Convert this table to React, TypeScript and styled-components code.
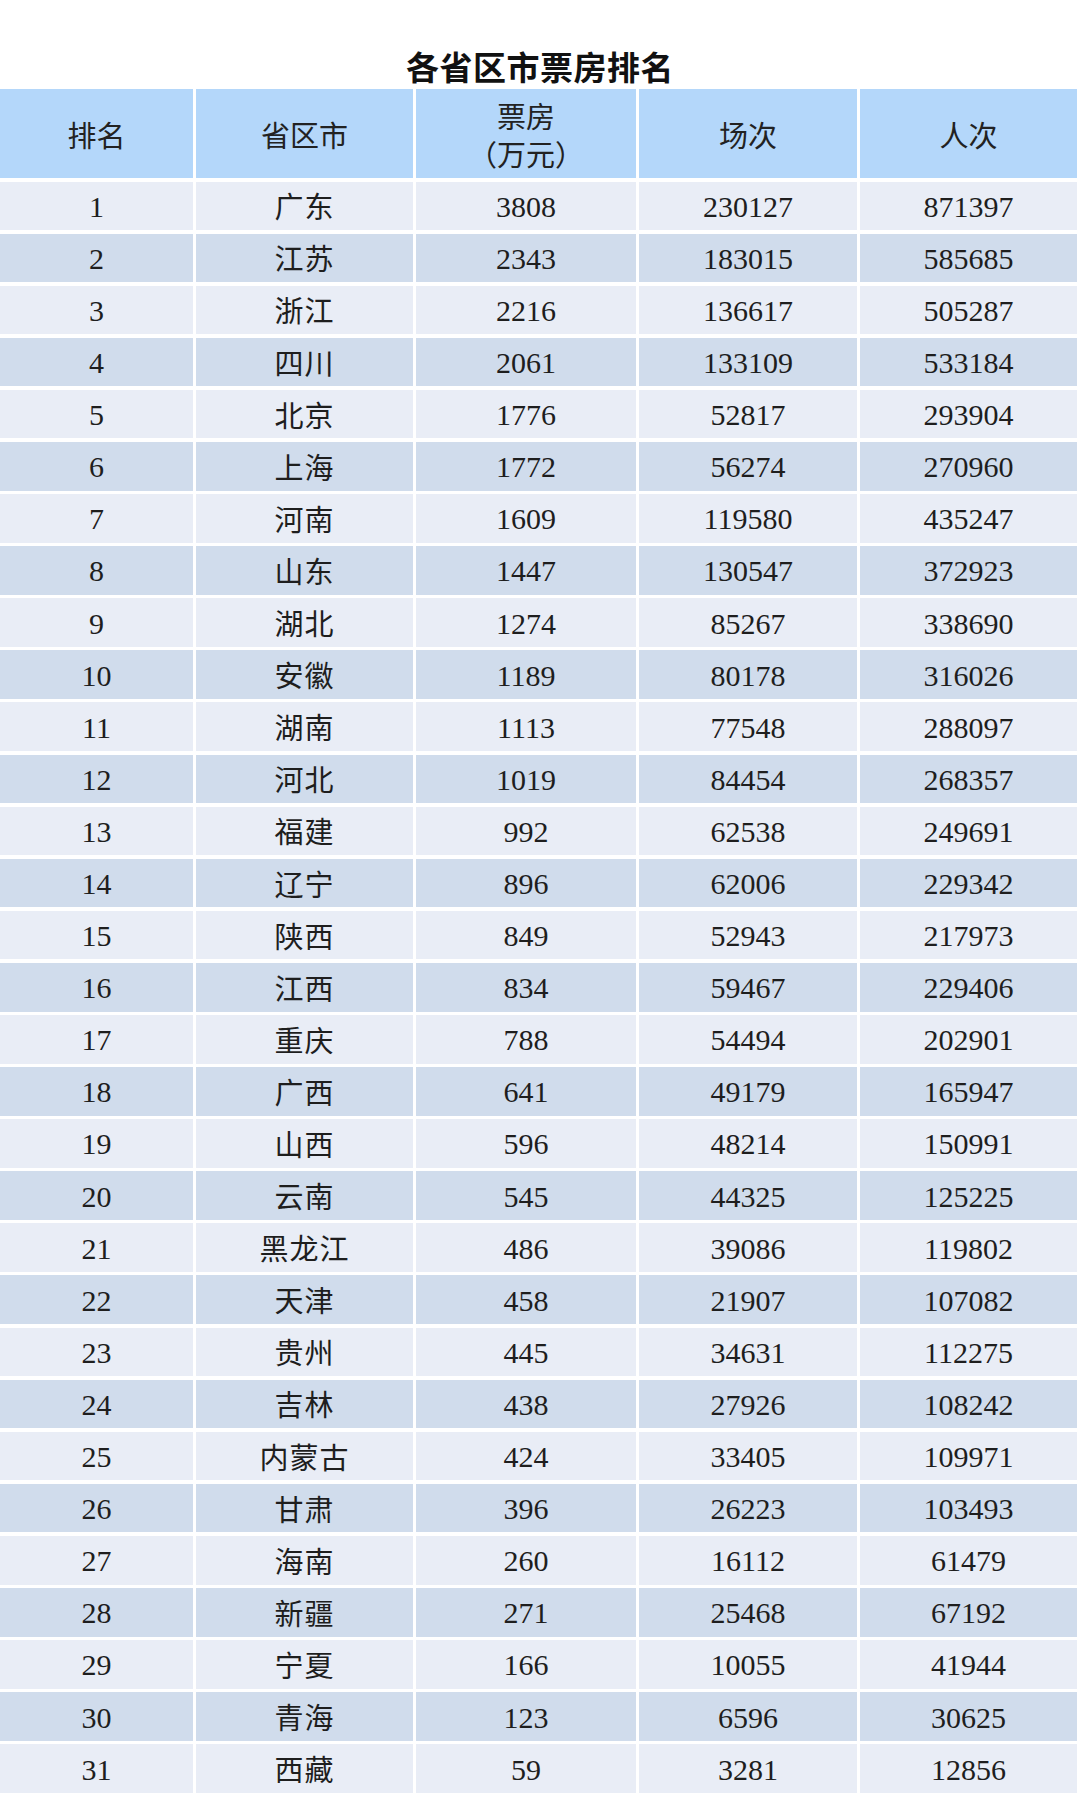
import React from "react"
import styled, { createGlobalStyle } from "styled-components"

const GlobalStyle = createGlobalStyle`
  html, body {
    margin: 0;
    padding: 0;
    background: #ffffff;
  }
  body {
    font-family: "Liberation Serif", "Noto Sans CJK SC", serif;
    color: #1e1e1e;
  }
`

const Page = styled.div`
  width: 1080px;
  padding-top: 50px;
  box-sizing: border-box;
`

const Title = styled.h1`
  margin: 0 0 6px;
  font-family: "Noto Sans CJK SC", sans-serif;
  font-size: 33px;
  line-height: 33px;
  font-weight: 700;
  text-align: center;
  color: #111111;
  letter-spacing: 0.5px;
`

const Table = styled.div`
  display: grid;
  width: 1077px;
  grid-template-columns: 193px 217px 220px 218px 217px;
  grid-template-rows: 89px;
  grid-auto-rows: 48.6px;
  column-gap: 3px;
  row-gap: 3.5px;
`

const HeadCell = styled.div`
  display: flex;
  flex-direction: column;
  align-items: center;
  justify-content: center;
  background: #b4d7fa;
  font-family: "Noto Sans CJK SC", sans-serif;
  font-size: 29px;
  line-height: 38px;
  font-weight: 400;
  color: #222222;
`

const Cell = styled.div<{ $even: boolean }>`
  display: flex;
  align-items: center;
  justify-content: center;
  background: ${(p) => (p.$even ? "#d0dcec" : "#e9edf6")};
  font-size: 30px;
  line-height: 1;
  padding-top: 2px;
  box-sizing: border-box;
`

const Name = styled.span`
  font-family: "Noto Sans CJK SC", sans-serif;
  font-size: 29px;
  letter-spacing: 1px;
  margin-top: -2px;
`

type Row = [string, number, number, number]

const rows: Row[] = [
  ["广东", 3808, 230127, 871397],
  ["江苏", 2343, 183015, 585685],
  ["浙江", 2216, 136617, 505287],
  ["四川", 2061, 133109, 533184],
  ["北京", 1776, 52817, 293904],
  ["上海", 1772, 56274, 270960],
  ["河南", 1609, 119580, 435247],
  ["山东", 1447, 130547, 372923],
  ["湖北", 1274, 85267, 338690],
  ["安徽", 1189, 80178, 316026],
  ["湖南", 1113, 77548, 288097],
  ["河北", 1019, 84454, 268357],
  ["福建", 992, 62538, 249691],
  ["辽宁", 896, 62006, 229342],
  ["陕西", 849, 52943, 217973],
  ["江西", 834, 59467, 229406],
  ["重庆", 788, 54494, 202901],
  ["广西", 641, 49179, 165947],
  ["山西", 596, 48214, 150991],
  ["云南", 545, 44325, 125225],
  ["黑龙江", 486, 39086, 119802],
  ["天津", 458, 21907, 107082],
  ["贵州", 445, 34631, 112275],
  ["吉林", 438, 27926, 108242],
  ["内蒙古", 424, 33405, 109971],
  ["甘肃", 396, 26223, 103493],
  ["海南", 260, 16112, 61479],
  ["新疆", 271, 25468, 67192],
  ["宁夏", 166, 10055, 41944],
  ["青海", 123, 6596, 30625],
  ["西藏", 59, 3281, 12856],
]

const App = () => (
  <>
    <GlobalStyle />
    <Page>
      <Title>各省区市票房排名</Title>
      <Table>
        <HeadCell>排名</HeadCell>
        <HeadCell>省区市</HeadCell>
        <HeadCell>
          <span>票房</span>
          <span>（万元）</span>
        </HeadCell>
        <HeadCell>场次</HeadCell>
        <HeadCell>人次</HeadCell>
        {rows.map(([name, box, shows, people], i) => {
          const even = i % 2 === 1
          return (
            <React.Fragment key={name}>
              <Cell $even={even}>{i + 1}</Cell>
              <Cell $even={even}>
                <Name>{name}</Name>
              </Cell>
              <Cell $even={even}>{box}</Cell>
              <Cell $even={even}>{shows}</Cell>
              <Cell $even={even}>{people}</Cell>
            </React.Fragment>
          )
        })}
      </Table>
    </Page>
  </>
)

export default App
